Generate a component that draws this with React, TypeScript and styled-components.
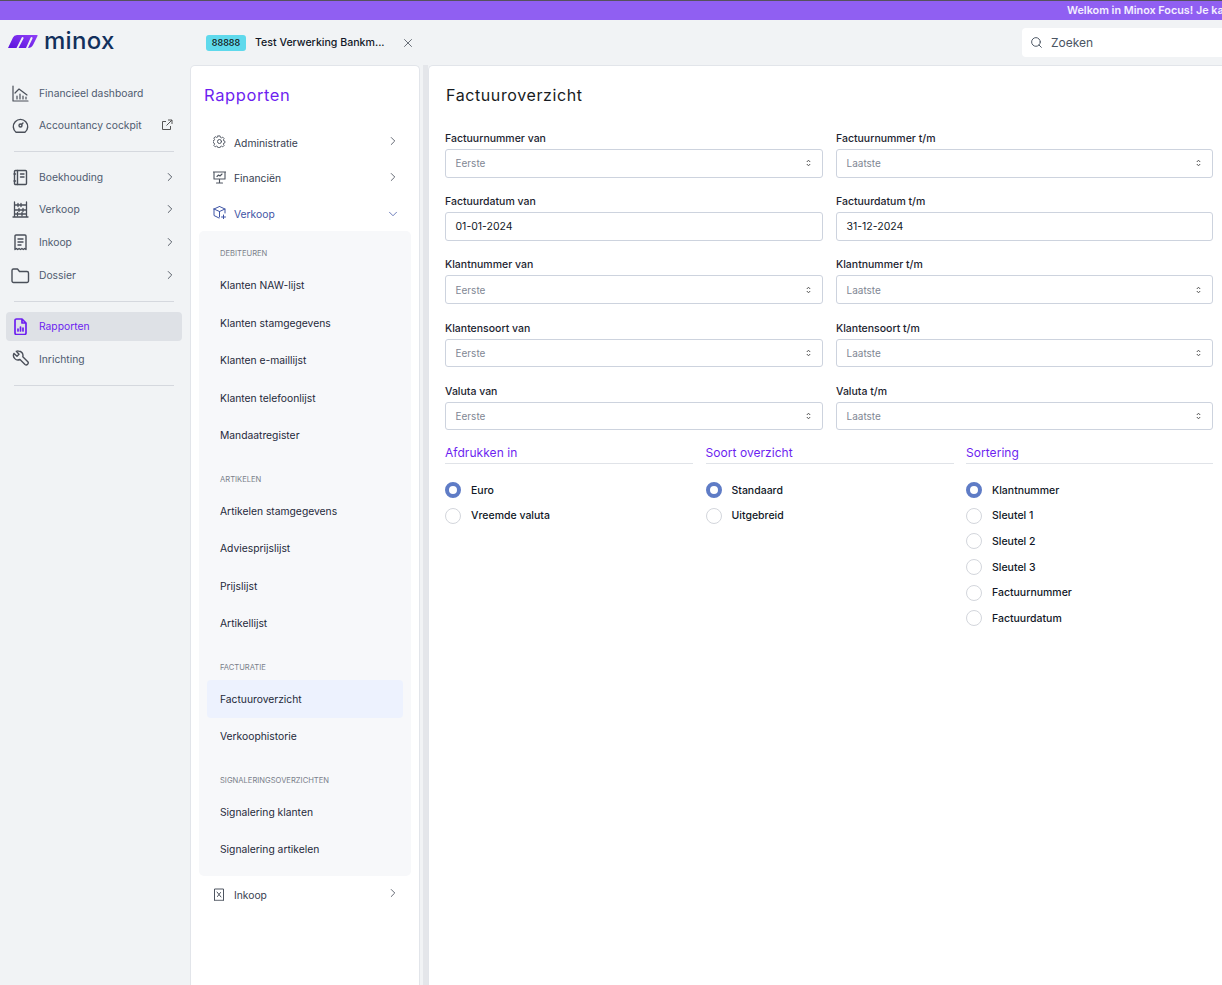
import React from "react";
import styled, { createGlobalStyle } from "styled-components";
import { ChevronRight, ChevronDown, X, Search } from "lucide-react";

const Global = createGlobalStyle`
  html, body { margin: 0; padding: 0; height: 100%; overflow: hidden; background: #f1f3f5; }
  * { box-sizing: border-box; }
  body { font-family: "Inter", "Noto Sans", sans-serif; font-size: 10.3px; color: #1f2937; }
`;
const HEAD = `"Inter", "Lato", sans-serif`;

const Page = styled.div`
  width: 1222px; height: 985px; display: flex; flex-direction: column; overflow: hidden; background: #f1f3f5;
`;
const Banner = styled.div`
  height: 20px; flex: none; border-top: 1px solid #55525c; background: #905ff2; color: #f4efff;
  font-weight: 600; font-size: 10.8px; line-height: 19px; white-space: nowrap; overflow: hidden; padding-left: 1067px;
`;
const Header = styled.header`
  height: 45px; flex: none; display: flex; align-items: center;
`;
const Logo = styled.div`
  width: 206px; flex: none; display: flex; align-items: center; padding-left: 8px; gap: 6px; height: 44px; padding-bottom: 3px;
`;
const LogoText = styled.span`
  font-family: "Inter", sans-serif; font-weight: 500; font-size: 24px; letter-spacing: 0.3px; color: #12305c; line-height: 1;
`;
const Badge = styled.span`
  width: 40px; height: 16px; border-radius: 3px; background: #5fd9ec; color: #111; font-size: 9px; font-weight: 500;
  text-align: center; line-height: 15px; flex: none; margin-top: 1px;
`;
const TabTitle = styled.span`
  margin-left: 9px; width: 129px; flex: none; font-size: 10.6px; font-weight: 500; color: #111827; white-space: nowrap;
`;
const TabClose = styled.span`
  margin-left: 17px; display: flex; color: #555b66;
`;
const SearchBox = styled.div`
  margin-left: auto; width: 200px; height: 29px; background: #fff; border-radius: 4px 0 0 4px; display: flex; align-items: center;
  padding-left: 8px; gap: 8px; color: #4b5563; font-size: 12px;
`;
const Body = styled.div`
  flex: 1; display: flex; min-height: 0;
`;
const Sidebar = styled.nav`
  width: 190px; flex: none; padding: 12px 8px 0 6px; display: flex; flex-direction: column;
`;
const SideItem = styled.div<{ $active?: boolean; $h?: number }>`
  height: ${(p) => p.$h ?? 32}px; flex: none; display: flex; align-items: center; border-radius: 4px; padding: 0 7px 0 6px;
  background: ${(p) => (p.$active ? "#dee1e6" : "transparent")};
  color: ${(p) => (p.$active ? "#6d1ff0" : "#4f5b70")};
  font-size: 10.3px;
`;
const SideIcon = styled.span`
  width: 17px; height: 17px; display: flex; flex: none; margin-right: 10px; color: #4a4f59;
`;
const ActiveIcon = styled(SideIcon)`
  color: #6d1ff0;
`;
const Grow = styled.span`
  flex: 1; white-space: nowrap;
`;
const Chevron = styled.span<{ $open?: boolean; $lift?: number }>`
  display: flex; color: ${(p) => (p.$open ? "#3f55a5" : "#4f5560")}; margin-right: -2px; position: relative; top: ${(p) => -(p.$lift ?? 0)}px;
`;
const ExternalLink = styled.span`
  display: flex; margin-right: 2px;
`;
const SideRule = styled.hr<{ $before: number; $after: number }>`
  width: 160px; height: 1px; border: 0; background: #d5d8de; flex: none; margin: ${(p) => p.$before}px 0 ${(p) => p.$after}px 8px;
`;
const Panel = styled.aside`
  width: 230px; flex: none; background: #fff; border: 1px solid #e2e5ea; border-bottom: 0; border-radius: 5px 5px 0 0; padding: 0 8px; display: flex; flex-direction: column;
`;
const PanelTitle = styled.h2`
  margin: 20px 0 20px 5px; font-family: ${HEAD}; font-weight: 400; font-size: 16.5px; line-height: 19px; color: #6d1ff0; letter-spacing: .6px;
`;
const PanelItem = styled.div<{ $open?: boolean }>`
  height: 35.5px; display: flex; align-items: center; padding: 0 13px 0 14px; flex: none; font-size: 10.3px;
  color: ${(p) => (p.$open ? "#3f55a5" : "#374151")};
`;
const PanelIcon = styled.span`
  width: 13px; height: 13px; display: flex; flex: none; margin-right: 8px; position: relative; top: -1px; color: #4e5560;
`;
const OpenIcon = styled(PanelIcon)`
  color: #3f55a5;
`;
const SubPanel = styled.div`
  background: #f7f8fa; border-radius: 5px; height: 645px; flex: none; padding: 10px 8px 0; display: flex; flex-direction: column; margin: -1px 0 2px;
`;
const GroupLabel = styled.div<{ $gap?: number }>`
  height: 26px; padding-left: 13px; margin-top: ${(p) => p.$gap ?? 0}px; display: flex; align-items: center; font-size: 7.6px; color: #7a7f8a; flex: none;
`;
const SubItem = styled.div<{ $active?: boolean }>`
  height: 37.5px; flex: none; display: flex; align-items: center; padding-left: 13px; font-size: 10.3px; color: #1f2a3a; border-radius: 4px;
  background: ${(p) => (p.$active ? "#edf2fe" : "transparent")};
`;
const Splitter = styled.div`
  width: 5px; flex: none; margin: 0 0 0 3px; background: #e4e6ea;
`;
const Main = styled.main`
  flex: 1; min-width: 0; background: #fff; border: 1px solid #e2e5ea; border-width: 1px 0 0 1px; border-radius: 5px 0 0 0; padding: 20px 9px 0 16px;
`;
const MainTitle = styled.h1`
  margin: 0 0 26px 1px; font-family: ${HEAD}; font-weight: 400; font-size: 16px; line-height: 19px; color: #171b22; letter-spacing: .6px;
`;
const FormGrid = styled.div`
  display: grid; grid-template-columns: 378px 377px; column-gap: 13px; row-gap: 7px;
`;
const Field = styled.div`
  display: flex; flex-direction: column; height: 56.2px;
`;
const FieldLabel = styled.label`
  font-size: 10.5px; font-weight: 500; color: #1c2430; line-height: 13px; height: 17px; margin-top: 1px;
`;
const SelectBox = styled.div<{ $date?: boolean }>`
  height: 28.5px; border: 1px solid #cdd3de; border-radius: 3px; background: #fff; display: flex; align-items: center; justify-content: space-between;
  padding: 0 11px 0 9.5px; font-size: ${(p) => (p.$date ? 10.5 : 10)}px; color: ${(p) => (p.$date ? "#111827" : "#7f8794")}; flex: none;
`;
const Sections = styled.div`
  display: grid; grid-template-columns: 248px 248px 247px; column-gap: 12.5px; margin-top: -1.5px;
`;
const SectionHead = styled.div`
  font-family: ${HEAD}; font-size: 12px; color: #6d1ff0; line-height: 15px; height: 26px; padding-top: 7px; border-bottom: 1px solid #e0e3e8; margin-bottom: 13px; letter-spacing: .05px;
`;
const RadioRow = styled.div`
  height: 25.6px; display: flex; align-items: center; gap: 10px; font-size: 10.5px; font-weight: 500; color: #111827;
`;
const RadioDot = styled.span<{ $on?: boolean }>`
  width: 16px; height: 16px; border-radius: 50%; background: #fff; flex: none;
  border: ${(p) => (p.$on ? "4.5px solid #5f7cc6" : "1px solid #d3d6dc")};
`;

const S = { width: "100%", height: "100%", fill: "none", stroke: "currentColor", strokeWidth: 1.6, strokeLinecap: "round", strokeLinejoin: "round" } as const;

const Updown = () => (
  <svg width="5" height="8" viewBox="0 0 5 8" fill="none" stroke="#555" strokeWidth="1"><path d="M.8 3 2.500 1.200 4.200 3M.8 5 2.500 6.800 4.200 5" /></svg>
);
const LogoMark = () => (
  <svg width="30" height="14" viewBox="0 0 30 14"><defs><linearGradient id="lg" x1="0" x2="1" y1="1" y2="0"><stop offset="0" stopColor="#5a10dc" /><stop offset="1" stopColor="#9040f8" /></linearGradient></defs>
    <path fill="url(#lg)" d="M0 14 5 3.500Q6 1 9 1H29Q30 1 29.500 2L25 11Q23.500 14 20 14L24.500 4.500Q25 3 23.500 3Q23 3 22.500 4L18 14H10.500L15.500 4.500Q16 3 14.500 3Q14 3 13.500 4L8.500 14Z" /></svg>
);
const icons: Record<string, React.ReactNode> = {
  dash: <svg viewBox="0 0 17 17" {...S} strokeWidth={1.2}><path d="M1 1v15h15M3 8l4-4 4 3 4 3M5 14v-3M8 14v-5M11 14v-3M14 14v-2" /></svg>,
  gauge: <svg viewBox="0 0 17 17" {...S} strokeWidth={1.4}><path d="M4 15.200A7.200 7.200 0 1 1 13 15.200Z" /><circle cx="8.500" cy="8.500" r="1.500" /><path d="M9.500 7.500 11 6" /></svg>,
  book: <svg viewBox="0 0 17 17" {...S} strokeWidth={1.4}><rect x="2.500" y="1.500" width="12" height="14" rx="1" /><path d="M5.500 1.500v14M2 5h1.500M2 12h1.500M8.500 5h3.500M8.500 8h3.500" /></svg>,
  abacus: <svg viewBox="0 0 17 17" {...S} strokeWidth={1.3}><path d="M1 16h15M2.500 16V1M14.500 16V1M2.500 4h12M2.500 9h12M2.500 13h12M6 2.500v3M9 2.500v3M7 7.500v3M11 7.500v3M5.500 11.500v3M10 11.500v3" /></svg>,
  receipt: <svg viewBox="0 0 17 17" {...S} strokeWidth={1.4}><path d="M3 15.500V2a1 1 0 0 1 1-1h9a1 1 0 0 1 1 1v13.500l-1.400-1-1.300 1-1.400-1-1.400 1-1.400-1-1.400 1-1.200-1ZM6 5h5M6 8h5M6 11h3" /></svg>,
  folder: <svg viewBox="0 0 17 17" {...S} strokeWidth={1.4} style={{ overflow: "visible" }}><path d="M0 3.500A1.500 1.500 0 0 1 1.500 2h4l2 2.500H15A1.500 1.500 0 0 1 16.500 6v8a1.500 1.500 0 0 1-1.500 1.500H1.500A1.500 1.500 0 0 1 0 14Z" /></svg>,
  report: <svg viewBox="0 0 17 17" {...S} strokeWidth={1.7}><path d="M3 2.500A1.500 1.500 0 0 1 4.500 1H10l4 4v10a1.500 1.500 0 0 1-1.500 1.500h-8A1.500 1.500 0 0 1 3 15ZM10 1v4h4M6 13v-2M8.500 13V9M11 13v-3" /></svg>,
  wrench: <svg viewBox="0 0 17 17" {...S} strokeWidth={1.4}><path d="M6.500 1a4.500 4.500 0 0 1 4.300 5.700l5 5a2 2 0 0 1-2.800 2.800l-5-5A4.500 4.500 0 0 1 2 3.400l3 2.800 2-2L4.300 1.300A4.500 4.500 0 0 1 6.500 1Z" /></svg>,
  gear: <svg viewBox="0 0 13 13" {...S} strokeWidth={1}><circle cx="6.500" cy="6.500" r="2" /><path d="M5.300 1h2.400l.3 1.500 1.300.6 1.300-.8 1.500 1.600-.8 1.300.5 1.300 1.200.3v1.600l-1.200.3-.5 1.300.8 1.300-1.500 1.600-1.300-.8-1.300.5-.3 1.200H5.300l-.3-1.200-1.300-.5-1.300.8-1.500-1.600.8-1.300-.5-1.300L0 7.900V6.300l1.200-.3.500-1.300-.8-1.300 1.500-1.600 1.300.8L5 2.100Z" transform="scale(.92)" /></svg>,
  screen: <svg viewBox="0 0 13 13" {...S} strokeWidth={1.1}><path d="M0 1h13M1 1v7h11V1M6.500 8v4M3.500 12h6M4 5.500l1.500-1.500 1.500 1 2-2" /></svg>,
  box: <svg viewBox="0 0 13 13" {...S} strokeWidth={1}><path d="M6.500.5 12 3v4M1 3v6.500L6 12M1 3l5.500 2.500L12 3M1 3 6.500.5M6.500 5.500V11M10.500 9v4M8.500 11h4" /></svg>,
  invoice: <svg viewBox="0 0 13 13" {...S} strokeWidth={1}><path d="M1.500 12V1h9v11" /><path d="M1.500 12.300h9" strokeDasharray="1 1" /><path d="M4 4l4 5M4.500 8.500l3-4" /></svg>,
};

const sideTop: [string, string][] = [["dash", "Financieel dashboard"], ["gauge", "Accountancy cockpit"]];
const sideMid: [string, string, number][] = [["book", "Boekhouding", 32], ["abacus", "Verkoop", 32.5], ["receipt", "Inkoop", 33], ["folder", "Dossier", 33]];

const groups: { label: string; items: string[]; gap?: number }[] = [
  { label: "DEBITEUREN", items: ["Klanten NAW-lijst", "Klanten stamgegevens", "Klanten e-maillijst", "Klanten telefoonlijst", "Mandaatregister"] },
  { label: "ARTIKELEN", gap: 12, items: ["Artikelen stamgegevens", "Adviesprijslijst", "Prijslijst", "Artikellijst"] },
  { label: "FACTURATIE", gap: 12, items: ["Factuuroverzicht", "Verkoophistorie"] },
  { label: "SIGNALERINGSOVERZICHTEN", gap: 12, items: ["Signalering klanten", "Signalering artikelen"] },
];

const fields: [string, string, boolean][] = [
  ["Factuurnummer van", "Eerste", false], ["Factuurnummer t/m", "Laatste", false],
  ["Factuurdatum van", "01-01-2024", true], ["Factuurdatum t/m", "31-12-2024", true],
  ["Klantnummer van", "Eerste", false], ["Klantnummer t/m", "Laatste", false],
  ["Klantensoort van", "Eerste", false], ["Klantensoort t/m", "Laatste", false],
  ["Valuta van", "Eerste", false], ["Valuta t/m", "Laatste", false],
];
const sections = [
  { title: "Afdrukken in", opts: ["Euro", "Vreemde valuta"] },
  { title: "Soort overzicht", opts: ["Standaard", "Uitgebreid"] },
  { title: "Sortering", opts: ["Klantnummer", "Sleutel 1", "Sleutel 2", "Sleutel 3", "Factuurnummer", "Factuurdatum"] },
];

export default function App() {
  return (
    <Page>
      <Global />
      <Banner>Welkom in Minox Focus! Je kan hier aan de slag met je administratie</Banner>
      <Header>
        <Logo><LogoMark /><LogoText>minox</LogoText></Logo>
        <Badge>88888</Badge>
        <TabTitle>Test Verwerking Bankm...</TabTitle>
        <TabClose><X size={14} strokeWidth={1.5} /></TabClose>
        <SearchBox><Search size={13} strokeWidth={1.8} /><span>Zoeken</span></SearchBox>
      </Header>
      <Body>
        <Sidebar>
          {sideTop.map(([i, t], n) => (
            <SideItem key={t}>
              <SideIcon>{icons[i]}</SideIcon>
              <Grow>{t}</Grow>
              {n === 1 && (
                <ExternalLink>
                  <svg width="12" height="12" viewBox="0 0 12 12" fill="none" stroke="#555" strokeWidth="1"><path d="M9.500 7v3.500h-8v-8H5M7 1h4v4M11 1 5.500 6.500" /></svg>
                </ExternalLink>
              )}
            </SideItem>
          ))}
          <SideRule $before={10} $after={9} />
          {sideMid.map(([i, t, h]) => (
            <SideItem key={t} $h={h}>
              <SideIcon>{icons[i]}</SideIcon>
              <Grow>{t}</Grow>
              <Chevron><ChevronRight size={14} strokeWidth={1.6} /></Chevron>
            </SideItem>
          ))}
          <SideRule $before={9} $after={10} />
          <SideItem $active $h={29}>
            <ActiveIcon>{icons.report}</ActiveIcon>
            <Grow>Rapporten</Grow>
          </SideItem>
          <SideItem $h={36}>
            <SideIcon>{icons.wrench}</SideIcon>
            <Grow>Inrichting</Grow>
          </SideItem>
          <SideRule $before={8} $after={0} />
        </Sidebar>
        <Panel>
          <PanelTitle>Rapporten</PanelTitle>
          <PanelItem>
            <PanelIcon>{icons.gear}</PanelIcon><Grow>Administratie</Grow><Chevron $lift={2}><ChevronRight size={14} strokeWidth={1.5} /></Chevron>
          </PanelItem>
          <PanelItem>
            <PanelIcon>{icons.screen}</PanelIcon><Grow>Financiën</Grow><Chevron $lift={1}><ChevronRight size={14} strokeWidth={1.5} /></Chevron>
          </PanelItem>
          <PanelItem $open>
            <OpenIcon>{icons.box}</OpenIcon><Grow>Verkoop</Grow><Chevron $open><ChevronDown size={14} strokeWidth={1.3} /></Chevron>
          </PanelItem>
          <SubPanel>
            {groups.map((g) => (
              <React.Fragment key={g.label}>
                <GroupLabel $gap={g.gap}>{g.label}</GroupLabel>
                {g.items.map((it) => (
                  <SubItem key={it} $active={it === "Factuuroverzicht"}>{it}</SubItem>
                ))}
              </React.Fragment>
            ))}
          </SubPanel>
          <PanelItem>
            <PanelIcon>{icons.invoice}</PanelIcon><Grow>Inkoop</Grow><Chevron $lift={2}><ChevronRight size={14} strokeWidth={1.5} /></Chevron>
          </PanelItem>
        </Panel>
        <Splitter />
        <Main>
          <MainTitle>Factuuroverzicht</MainTitle>
          <FormGrid>
            {fields.map(([label, val, date]) => (
              <Field key={label}>
                <FieldLabel>{label}</FieldLabel>
                <SelectBox $date={date}>
                  <span>{val}</span>
                  {!date && <Updown />}
                </SelectBox>
              </Field>
            ))}
          </FormGrid>
          <Sections>
            {sections.map((s) => (
              <div key={s.title}>
                <SectionHead>{s.title}</SectionHead>
                {s.opts.map((o, i) => (
                  <RadioRow key={o}><RadioDot $on={i === 0} />{o}</RadioRow>
                ))}
              </div>
            ))}
          </Sections>
        </Main>
      </Body>
    </Page>
  );
}
